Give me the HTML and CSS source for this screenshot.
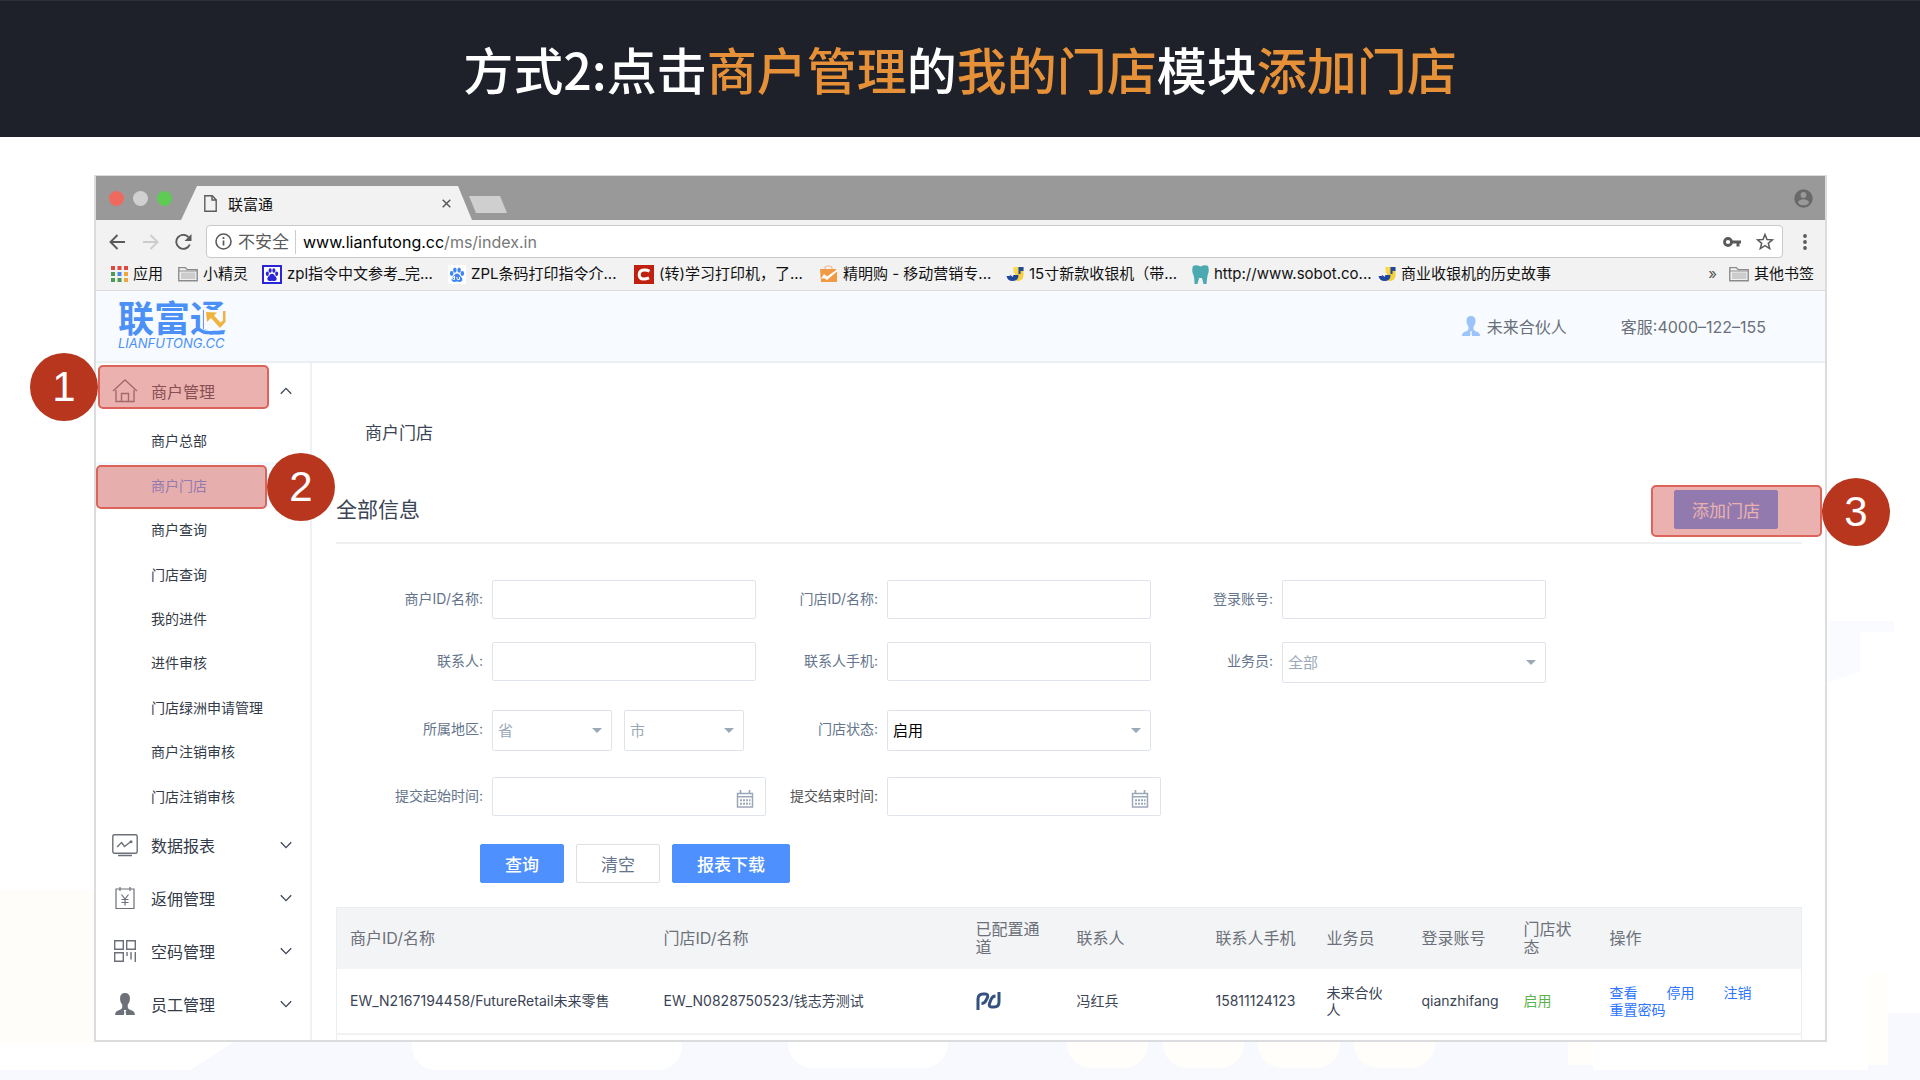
FILE: index.html
```html
<!DOCTYPE html>
<html lang="zh-CN">
<head>
<meta charset="utf-8">
<meta name="viewport" content="width=device-width, initial-scale=1">
<title>添加门店</title>
<link rel="stylesheet" href="styles.css">
</head>
<body>
<svg width="0" height="0" class="symbols" aria-hidden="true">
  <symbol id="folder" viewBox="0 0 20 16"><path d="M.8 14.8V1.6h6.6l1.8 2h10v11.200z" fill="#f2f2f2" stroke="#8b8b8b" stroke-width="1.4"/><path d="M3 6.500h14.400v6.500H3z" fill="#ccc"/><path d="M1 5h18" stroke="#8b8b8b"/></symbol>
  <symbol id="person" viewBox="0 0 18 20"><path d="M9 0c3 0 4.500 1.700 4.500 5 0 2.600-1 4.400-2 5.500v2.300c0 1.300 1 2 2.800 2.700C17 16.600 18 17.400 18 20h-8l-.4-3 .6-1.500H7.800l.6 1.500-.4 3H0c0-2.600 1-3.400 3.700-4.500 1.800-.7 2.800-1.400 2.800-2.700v-2.300c-1-1.100-2-2.900-2-5.500 0-3.300 1.500-5 4.500-5z" fill="currentColor"/></symbol>
  <symbol id="jlogo" viewBox="0 0 17 14"><path d="M7 0h10v8q0 5-5 6h-2z" fill="#f7cf3a"/><path d="M12 0h5v4h-3v3h-2zM7 8h5q0 6-6 6-5 0-6-5h3l1-1 2 2z" fill="#1f479c"/><path d="M7 0h4v6H7z" fill="#fbd94a"/></symbol>
  <symbol id="down" viewBox="0 0 12 8"><path d="M.8 1.200 6 6.600l5.200-5.400" fill="none" stroke="#3c4656" stroke-width="1.300"/></symbol>
  <symbol id="calendar" viewBox="0 0 17 18"><path d="M1 3.500h15V17H1z" fill="none" stroke="#9aa7b6" stroke-width="1.500"/><path d="M1 6.700h15M4 0v4M13 0v4" stroke="#9aa7b6" stroke-width="1.600"/><path d="M3.500 10.300h10.500M3.500 13.700h10.500" stroke="#9aa7b6" stroke-width="2" stroke-dasharray="2 1"/></symbol>
  <symbol id="paw" viewBox="0 0 18 18"><ellipse cx="3" cy="8" rx="2" ry="2.800"/><ellipse cx="6.600" cy="4" rx="2" ry="2.900"/><ellipse cx="11.400" cy="4" rx="2" ry="2.900"/><ellipse cx="15" cy="8" rx="2" ry="2.800"/><path d="M9 8c2.500 0 3 2.300 4.600 3.700 1.700 1.500 1.900 3.300.8 4.700-1.400 1.700-3.400.6-5.400.6s-4 1.100-5.400-.6c-1.100-1.400-.9-3.200.8-4.700C6 10.300 6.500 8 9 8z"/></symbol>
</svg>

<svg class="backdrop" viewBox="0 0 1920 1080" preserveAspectRatio="none" aria-hidden="true">
  <path d="M0 1070h190l55-35h1680v45H0zM1888 1013h32v67h-32z" fill="#f8f9fe"/>
  <path d="M0 890h94v155H0z" fill="#fffdf9"/>
  <path d="M1828 621h66v11h-34v40l-32 10z" fill="#fafbfe"/>
  <g fill="#fff"><rect x="412" y="1000" width="270" height="70" rx="24"/><rect x="788" y="1000" width="160" height="68" rx="24"/><path d="M1593 1000h275v70h-275z"/></g>
  <g fill="#fffefa"><rect x="1067" y="1000" width="81" height="68" rx="24"/><rect x="1163" y="1000" width="81" height="68" rx="24"/><rect x="1258" y="1000" width="82" height="68" rx="24"/><rect x="1354" y="1000" width="81" height="68" rx="24"/><path d="M1568 1000h25v65h-25zM1868 973h20v92h-20z"/></g>
</svg>

<header class="banner">
  <h1>方式2:点击<em>商户管理</em>的<em>我的门店</em>模块<em>添加门店</em></h1>
</header>

<main class="stage-area">
<div class="stage">
  <div class="window">
    <div class="tabstrip">
      <div class="lights"><i class="red"></i><i class="gray"></i><i class="green"></i></div>
      <div class="tab">
        <svg width="13" height="17" viewBox="0 0 13 17"><path d="M.8.8h7.400l4 4v11.400H.8zM8 1v4h4" fill="none" stroke="#5c5c5c" stroke-width="1.400"/></svg>
        <span>联富通</span>
        <button class="plain tab-close" aria-label="关闭"><svg width="9" height="9" viewBox="0 0 9 9"><path d="M.7.7l7.600 7.600M8.300.7.700 8.300" stroke="#5a5a5a" stroke-width="1.500"/></svg></button>
      </div>
      <button class="new-tab" aria-label="新标签页"></button>
      <svg class="profile" width="19" height="19" viewBox="0 0 19 19"><circle cx="9.500" cy="9.500" r="9.200" fill="#696969"/><circle cx="9.500" cy="6" r="2.900" fill="#999"/><ellipse cx="9.500" cy="13.300" rx="5.400" ry="3" fill="#999"/></svg>
    </div>

    <div class="toolbar">
      <button class="plain" aria-label="后退"><svg width="17" height="16" viewBox="0 0 17 16"><path d="M16 8H2M8.500 1 1.500 8l7 7" fill="none" stroke="#5a5a5a" stroke-width="1.900"/></svg></button>
      <button class="plain" aria-label="前进"><svg width="17" height="16" viewBox="0 0 17 16"><path d="M1 8h14M8.500 1l7 7-7 7" fill="none" stroke="#ccc" stroke-width="1.900"/></svg></button>
      <button class="plain" aria-label="刷新"><svg width="17" height="16" viewBox="0 0 17 16"><path d="M14.800 10.500A7 7 0 1 1 13.500 3.200" fill="none" stroke="#5a5a5a" stroke-width="1.900"/><path d="M16.500 0v7h-7z" fill="#5a5a5a"/></svg></button>
      <div class="address">
        <svg width="17" height="17" viewBox="0 0 17 17"><circle cx="8.500" cy="8.500" r="7.500" fill="none" stroke="#5a5a5a" stroke-width="1.600"/><path d="M8.500 7.400v5M8.500 4v1.900" stroke="#5a5a5a" stroke-width="1.700"/></svg>
        <span class="insecure">不安全</span>
        <span class="url">www.lianfutong.cc<span>/ms/index.in</span></span>
        <svg class="key" width="18" height="10" viewBox="0 0 18 10"><circle cx="5" cy="5" r="3.500" fill="none" stroke="#5a5a5a" stroke-width="2.800"/><path d="M9 3.400h9v3h-1.500V9.500h-3V6.400H9z" fill="#5a5a5a"/></svg>
        <svg width="18" height="17" viewBox="0 0 18 17"><path d="m9 1.500 2 5 5.500.3-4.200 3.500 1.400 5.300L9 12.700l-4.700 2.900 1.400-5.300L1.500 6.800 7 6.500z" fill="none" stroke="#5a5a5a" stroke-width="1.500"/></svg>
      </div>
      <button class="plain menu" aria-label="菜单"><svg width="4" height="16" viewBox="0 0 4 16"><g fill="#5a5a5a"><circle cx="2" cy="2" r="1.900"/><circle cx="2" cy="8" r="1.900"/><circle cx="2" cy="14" r="1.900"/></g></svg></button>
    </div>

    <nav class="bookmarks">
      <a href="#" class="bm-apps"><svg width="17" height="16" viewBox="0 0 17 16"><g fill="#e0483e"><path d="M0 0h4v4H0zM6.500 0h4v4h-4zM13 0h4v4h-4z"/></g><path d="M0 6h4v4H0zM0 12h4v4H0zM6.500 12h4v4h-4z" fill="#4a9a52"/><path d="M6.500 6h4v4h-4z" fill="#4b86ea"/><path d="M13 6h4v4h-4zM13 12h4v4h-4z" fill="#eda63a"/></svg>应用</a>
      <a href="#" class="bm-folder"><svg width="20" height="16"><use href="#folder"/></svg>小精灵</a>
      <a href="#"><svg width="20" height="19" viewBox="0 0 20 19"><path d="M1 1h18v17H1z" fill="#fff" stroke="#2a25d8" stroke-width="2"/><g fill="#2a25d8"><use href="#paw" x="3" y="2" width="14" height="15"/></g></svg>zpl指令中文参考_完...</a>
      <a href="#"><svg width="18" height="19" viewBox="0 0 18 19"><path d="M0 0h18v19H0z" fill="#fff"/><g fill="#3f86f5"><use href="#paw" x="1" y="1" width="16" height="17"/></g><path d="M6.500 11v3.500h-1q-1 0-1-1t1-1h1M9 12v1.500q0 1 1 1h1.500V12" fill="none" stroke="#fff"/></svg>ZPL条码打印指令介...</a>
      <a href="#"><svg width="20" height="19" viewBox="0 0 20 19"><path d="M0 0h20v19H0z" fill="#c0200f"/><path d="M15.500 6.200Q13.500 5 10.500 5 5.500 5 5.200 9.500q0 4.500 4.300 4.500 3 0 5.500-1.200" fill="none" stroke="#fff" stroke-width="3"/></svg>(转)学习打印机，了...</a>
      <a href="#"><svg width="18" height="18" viewBox="0 0 18 18"><path d="M5 5V3q0-2 3.500-2T12 3v2" fill="none" stroke="#f3b98a" stroke-width="1.200"/><path d="M0 4h16l1 2v11H1z" fill="#f19a45"/><path d="m1 14 3-5 3 2.500L17 4.500v2L7 15l-3-2z" fill="#fff"/></svg>精明购 - 移动营销专...</a>
      <a href="#"><svg width="18" height="14"><use href="#jlogo"/></svg>15寸新款收银机（带...</a>
      <a href="#"><svg width="17" height="19" viewBox="0 0 17 19"><path d="M1 1q3-1.500 7.500.5Q13-.5 16 1q1.500 4 0 8-1 3-1.500 10h-3l-1.500-6h-3L5.500 19h-3Q2.500 12 1 9-.5 5 1 1z" fill="#4da9b0"/></svg>http://www.sobot.co...</a>
      <a href="#"><svg width="18" height="14"><use href="#jlogo"/></svg>商业收银机的历史故事</a>
      <span class="more">»</span>
      <a href="#" class="bm-other"><svg width="20" height="16"><use href="#folder"/></svg>其他书签</a>
    </nav>

    <div class="app-header">
      <div class="logo">
        <div class="logo-name">联富通</div>
        <div class="logo-sub">LIANFUTONG.CC</div>
        <svg class="logo-arrow" width="22" height="19" viewBox="0 0 22 19"><path d="M0 0h22v19H0z" fill="#f7fbff"/><path d="m2 2 11 .5-3 3 6.500 7 2.500-2V1h2.500v11L16 18 7 8l-4 4z" fill="#efb33f"/></svg>
      </div>
      <div class="account"><svg width="18" height="20"><use href="#person"/></svg>未来合伙人</div>
      <div class="hotline">客服:4000–122–155</div>
    </div>

    <div class="app-body">
      <nav class="sidebar">
        <a href="#" class="group group-open">
          <svg width="26" height="24" viewBox="0 0 26 24"><path d="M1 12 13 1l12 11M4 11v11.500h18V11M9.500 22v-7.500h7V22" fill="none" stroke="#6c7079" stroke-width="1.400"/></svg>
          <span>商户管理</span>
          <svg width="12" height="8" viewBox="0 0 12 8"><path d="M.8 6.800 6 1.400l5.200 5.400" fill="none" stroke="#3c4656" stroke-width="1.300"/></svg>
        </a>
        <ul>
          <li><a href="#">商户总部</a></li>
          <li class="active"><a href="#">商户门店</a></li>
          <li><a href="#">商户查询</a></li>
          <li><a href="#">门店查询</a></li>
          <li><a href="#">我的进件</a></li>
          <li><a href="#">进件审核</a></li>
          <li><a href="#">门店绿洲申请管理</a></li>
          <li><a href="#">商户注销审核</a></li>
          <li><a href="#">门店注销审核</a></li>
        </ul>
        <a href="#" class="group"><svg width="26" height="24" viewBox="0 0 26 24"><rect x=".8" y="1.800" width="24.400" height="18.400" rx="1.500" fill="none" stroke="#6c7079" stroke-width="1.400"/><path d="m5 14 4.500-4.500 3 4 6.500-5M6 22.500h14" fill="none" stroke="#6c7079" stroke-width="1.400"/><circle cx="19" cy="8.700" r="1.500" fill="#6c7079"/></svg><span>数据报表</span><svg width="12" height="8"><use href="#down"/></svg></a>
        <a href="#" class="group"><svg width="26" height="24" viewBox="0 0 26 24"><path d="M4 3h18v19.500H4zM8 1v4M18 1v4M9.500 8.500 13 13l3.500-4.500M13 13v6.500M9.500 13.500h7M9.500 16.500h7" fill="none" stroke="#6c7079" stroke-width="1.200"/></svg><span>返佣管理</span><svg width="12" height="8"><use href="#down"/></svg></a>
        <a href="#" class="group"><svg width="26" height="24" viewBox="0 0 26 24"><path d="M2.700 1.700h8.600v8.600H2.700zM14.700 1.700h8.600v8.600h-8.600zM2.700 13.700h8.600v8.600H2.700zM15 13v4M19 13v7.500M23.300 13v10" fill="none" stroke="#6c7079" stroke-width="1.400"/></svg><span>空码管理</span><svg width="12" height="8"><use href="#down"/></svg></a>
        <a href="#" class="group"><svg width="26" height="22" class="staff"><use href="#person"/></svg><span>员工管理</span><svg width="12" height="8"><use href="#down"/></svg></a>
      </nav>

      <section class="content">
        <div class="crumb">商户门店</div>
        <div class="section-head">
          <h2>全部信息</h2>
          <button class="btn primary add">添加门店</button>
        </div>

        <form class="filters">
          <div class="field"><label for="f1">商户ID/名称:</label><input id="f1" type="text"></div>
          <div class="field"><label for="f2">门店ID/名称:</label><input id="f2" type="text"></div>
          <div class="field"><label for="f3">登录账号:</label><input id="f3" type="text"></div>
          <div class="field"><label for="f4">联系人:</label><input id="f4" type="text"></div>
          <div class="field"><label for="f5">联系人手机:</label><input id="f5" type="text"></div>
          <div class="field"><label for="f6">业务员:</label><span class="select"><select id="f6"><option>全部</option></select></span></div>
          <div class="field"><label for="f7">所属地区:</label><span class="select half"><select id="f7"><option>省</option></select></span><span class="select half"><select aria-label="市"><option>市</option></select></span></div>
          <div class="field"><label for="f8">门店状态:</label><span class="select chosen"><select id="f8"><option>启用</option></select></span></div>
          <div class="field date-start"><label for="f9">提交起始时间:</label><span class="date"><input id="f9" type="text"><svg width="18" height="18"><use href="#calendar"/></svg></span></div>
          <div class="field date-end"><label for="f10">提交结束时间:</label><span class="date"><input id="f10" type="text"><svg width="18" height="18"><use href="#calendar"/></svg></span></div>
        </form>
        <div class="actions">
          <button class="btn primary">查询</button>
          <button class="btn">清空</button>
          <button class="btn primary">报表下载</button>
        </div>

        <table>
          <colgroup><col class="c1"><col class="c2"><col class="c3"><col class="c4"><col class="c5"><col class="c6"><col class="c7"><col class="c8"><col class="c9"></colgroup>
          <thead><tr><th>商户ID/名称</th><th>门店ID/名称</th><th>已配置通道</th><th>联系人</th><th>联系人手机</th><th>业务员</th><th>登录账号</th><th>门店状态</th><th>操作</th></tr></thead>
          <tbody>
            <tr>
              <td>EW_N2167194458/FutureRetail未来零售</td>
              <td>EW_N0828750523/钱志芳测试</td>
              <td><svg width="25" height="20" viewBox="0 0 25 20"><path d="M2 19V8q0-5 5-5h2.500q3 0 2 3.500l-1.500 3q-1.500 3-4.500 3M23 1v10q0 5-5 5h-2.500q-3 0-2-3.500l1.500-4q1.500-3.500 4.500-3.500" fill="none" stroke="#34517f" stroke-width="3"/></svg></td>
              <td>冯红兵</td>
              <td>15811124123</td>
              <td>未来合伙人</td>
              <td>qianzhifang</td>
              <td class="on">启用</td>
              <td class="ops"><a href="#">查看</a><a href="#">停用</a><a href="#">注销</a><a href="#">重置密码</a></td>
            </tr>
            <tr><td colspan="9"></td></tr>
          </tbody>
        </table>
      </section>
    </div>
  </div>

  <div class="mark mark-1"></div><div class="badge badge-1">1</div>
  <div class="mark mark-2"></div><div class="badge badge-2">2</div>
  <div class="mark mark-3"></div><div class="badge badge-3">3</div>
</div>
</main>
</body>
</html>
```

FILE: styles.css
```css
* { box-sizing: border-box; }

body {
  margin: 0;
  height: 100vh;
  display: flex;
  flex-direction: column;
  position: relative;
  overflow: hidden;
  background: #fff;
  font-family: Inter, "Noto Sans CJK SC", sans-serif;
  font-size: 14px;
  color: #3a4454;
}

a { color: inherit; text-decoration: none; }
svg { display: block; flex: none; }
button, input, select { font-family: inherit; margin: 0; }
.symbols { position: absolute; }
.backdrop { position: absolute; inset: 0; width: 100%; height: 100%; z-index: -1; }
.plain { border: 0; background: none; padding: 0; }

/* Title banner */
.banner { background: #1f212a; border-top: 1px solid #2c2f38; padding: 32px 0 33px; }
.banner h1 {
  margin: 0;
  text-align: center;
  font-family: "Noto Sans CJK SC", sans-serif;
  font-size: 50px;
  line-height: 71px;
  font-weight: 500;
  color: #fff;
}
.banner em { font-style: normal; color: #e69138; }

/* Browser window */
.stage-area { flex: 1; min-height: 0; padding: 38px 93px 38px 94px; display: flex; }
.stage { position: relative; flex: 1; display: flex; min-width: 0; }
.window {
  flex: 1;
  min-width: 0;
  display: flex;
  flex-direction: column;
  overflow: hidden;
  border: 2px solid #dadcde;
  border-top-width: 1px;
  background: #fff;
}

.tabstrip { flex: none; height: 44px; background: #999; display: flex; align-items: flex-end; padding: 0 12px 0 13px; }
.lights { display: flex; gap: 9px; align-self: center; margin-right: 9px; }
.lights i { width: 15px; height: 15px; border-radius: 50%; }
.red { background: #ee6a5f; }
.gray { background: #d0d0d0; }
.green { background: #5fcb54; }
.tab {
  width: 291px;
  height: 34px;
  display: flex;
  align-items: center;
  gap: 11px;
  padding: 0 21px 0 23px;
  background: #f2f2f2;
  clip-path: polygon(16px 0, 277px 0, 100% 100%, 0 100%);
  font-size: 15px;
  color: #111;
}
.tab-close { margin-left: auto; }
.new-tab {
  width: 38px;
  height: 17px;
  margin: 0 0 7px -3px;
  border: 0;
  padding: 0;
  background: #cfcfcf;
  clip-path: polygon(0 0, 31px 0, 100% 100%, 7px 100%);
}
.profile { margin-left: auto; align-self: center; }

.toolbar { flex: none; background: #f2f2f2; display: flex; align-items: center; gap: 16px; padding: 5px 18px 4px 13px; }
.address {
  flex: 1;
  height: 33px;
  margin-left: -2px;
  display: flex;
  align-items: center;
  padding: 0 8px;
  border: 1px solid #c9c9c9;
  border-radius: 4px;
  background: #fff;
  font-size: 17px;
}
.insecure { color: #5a5a5a; line-height: 24px; margin-left: 6px; padding-right: 6px; border-right: 1px solid #ccc; }
.url { flex: 1; padding-left: 7px; font-size: 16px; color: #000; }
.url span { color: #777; }
.key { margin-right: 15px; }
.menu { margin-left: 4px; }

.bookmarks { flex: none; height: 29px; background: #f2f2f2; border-bottom: 1px solid #dcdcdc; display: flex; align-items: center; padding: 0 11px 4px 15px; font-size: 15px; line-height: 22px; color: #111; white-space: nowrap; }
.bookmarks a { display: flex; align-items: center; gap: 5px; width: 186px; }
.bookmarks .bm-apps { width: 67px; }
.bookmarks .bm-folder { width: 84px; }
.bookmarks .bm-other { width: auto; margin-left: 12px; }
.more { margin-left: auto; color: #555; }

/* App header */
.app-header { flex: none; height: 72px; display: flex; align-items: center; background: #f7fbff; border-bottom: 2px solid #eaeff4; padding: 0 59px 0 22px; font-size: 16px; color: #6a6f79; }
.logo { position: relative; color: #4a90f7; }
.logo-name { font-size: 36px; line-height: 34px; font-weight: 700; }
.logo-sub { font-size: 13px; line-height: 14px; font-style: italic; }
.logo-arrow { position: absolute; right: 0; top: 8px; }
.account { margin-left: auto; display: flex; align-items: center; gap: 7px; }
.account svg { color: #9dc3fb; }
.hotline { margin-left: 54px; }

.app-body { flex: 1; min-height: 0; display: flex; }

/* Sidebar */
.sidebar { flex: none; width: 216px; border-right: 2px solid #edf2f7; color: #333b48; }
.group { display: flex; align-items: center; height: 53px; padding: 0 18px 0 16px; font-size: 16px; }
.group span { flex: 1; margin-left: 13px; }
.group-open { height: 55px; }
.staff { color: #6c7079; }
.sidebar ul { list-style: none; margin: 0; padding: 0; min-height: 400px; display: grid; grid-auto-rows: 1fr; }
.sidebar li { display: flex; align-items: center; padding-left: 55px; }
.sidebar .active { background: #f5faff; color: #4d90fe; }

/* Content */
.content { flex: 1; min-width: 0; padding: 0 23px 0 24px; }
.crumb { padding: 57px 0 0 29px; font-size: 17px; line-height: 26px; }
.section-head { display: flex; align-items: center; justify-content: space-between; margin-top: 44px; padding: 0 24px 13px 0; border-bottom: 2px solid #eff0f2; }
.section-head h2 { margin: 0; font-size: 21px; line-height: 32px; font-weight: 400; }
.btn { height: 39px; padding: 0 24px; border: 1px solid #dcdfe4; border-radius: 2px; background: #fff; color: #65748a; font-size: 17px; }
.primary { background: #4d90fe; border-color: #4d90fe; color: #fff; font-weight: 500; }
.add { padding: 0 17px; font-weight: 400; }

.filters { display: grid; grid-template-columns: repeat(3, 395px); grid-template-rows: 62px 68px 67px auto; padding: 36px 0 0 41px; }
.field { display: flex; align-items: flex-start; }
.field label { width: 106px; margin-right: 9px; text-align: right; line-height: 38px; color: #64748b; white-space: nowrap; }
.field input { width: 264px; height: 39px; border: 1px solid #dfe4ec; border-radius: 2px; background: #fff; padding: 0 8px; font-size: 15px; }
.select { position: relative; width: 264px; }
.select.half { width: 120px; margin-right: 12px; }
.select select { width: 100%; height: 41px; appearance: none; border: 1px solid #dfe4ec; border-radius: 2px; background: #fff; padding: 0 5px; font-size: 15px; color: #9ba8b8; }
.select.chosen select { color: #000; }
.select::after { content: ""; position: absolute; right: 10px; top: 18px; border: 5px solid transparent; border-top-color: #9ba8b8; border-bottom: 0; }
.date { position: relative; }
.date input { width: 274px; }
.date svg { position: absolute; right: 12px; top: 13px; }
.date-start { grid-column-start: 1; }
.date-end label { color: #555; }
.actions { display: flex; gap: 12px; padding: 28px 0 24px 144px; }

/* Store table */
table { width: 100%; table-layout: fixed; border-collapse: collapse; border: 1px solid #ebeef1; }
.c1 { width: 314px; } .c2 { width: 312px; } .c3 { width: 101px; }
.c4 { width: 139px; } .c5 { width: 111px; } .c6 { width: 95px; }
.c7 { width: 102px; } .c8 { width: 86px; } .c9 { width: 205px; }
th, td { padding: 0 13px; text-align: left; font-weight: 400; }
th { height: 61px; background: #f3f4f6; color: #6b7079; font-size: 16px; line-height: 18px; }
td { height: 65px; border-bottom: 2px solid #f0f2f4; font-size: 14px; line-height: 17px; }
.on { color: #5cb34c; }
.ops a { display: inline-block; margin-right: 29px; color: #2d74ff; }

/* Step markers */
.mark { position: absolute; width: 171px; height: 44px; border: 2px solid #dc635a; border-radius: 5px; background: rgba(215, 99, 93, .5); }
.badge { position: absolute; width: 68px; height: 68px; border-radius: 50%; background: #b8361e; color: #fff; text-align: center; font: 42px/68px "Liberation Sans", Arial, sans-serif; }
.mark-1 { left: 4px; top: 190px; }
.badge-1 { left: -64px; top: 178px; }
.mark-2 { left: 2px; top: 290px; }
.badge-2 { left: 173px; top: 278px; }
.mark-3 { right: 5px; top: 310px; height: 52px; }
.badge-3 { right: -63px; top: 303px; }
```
